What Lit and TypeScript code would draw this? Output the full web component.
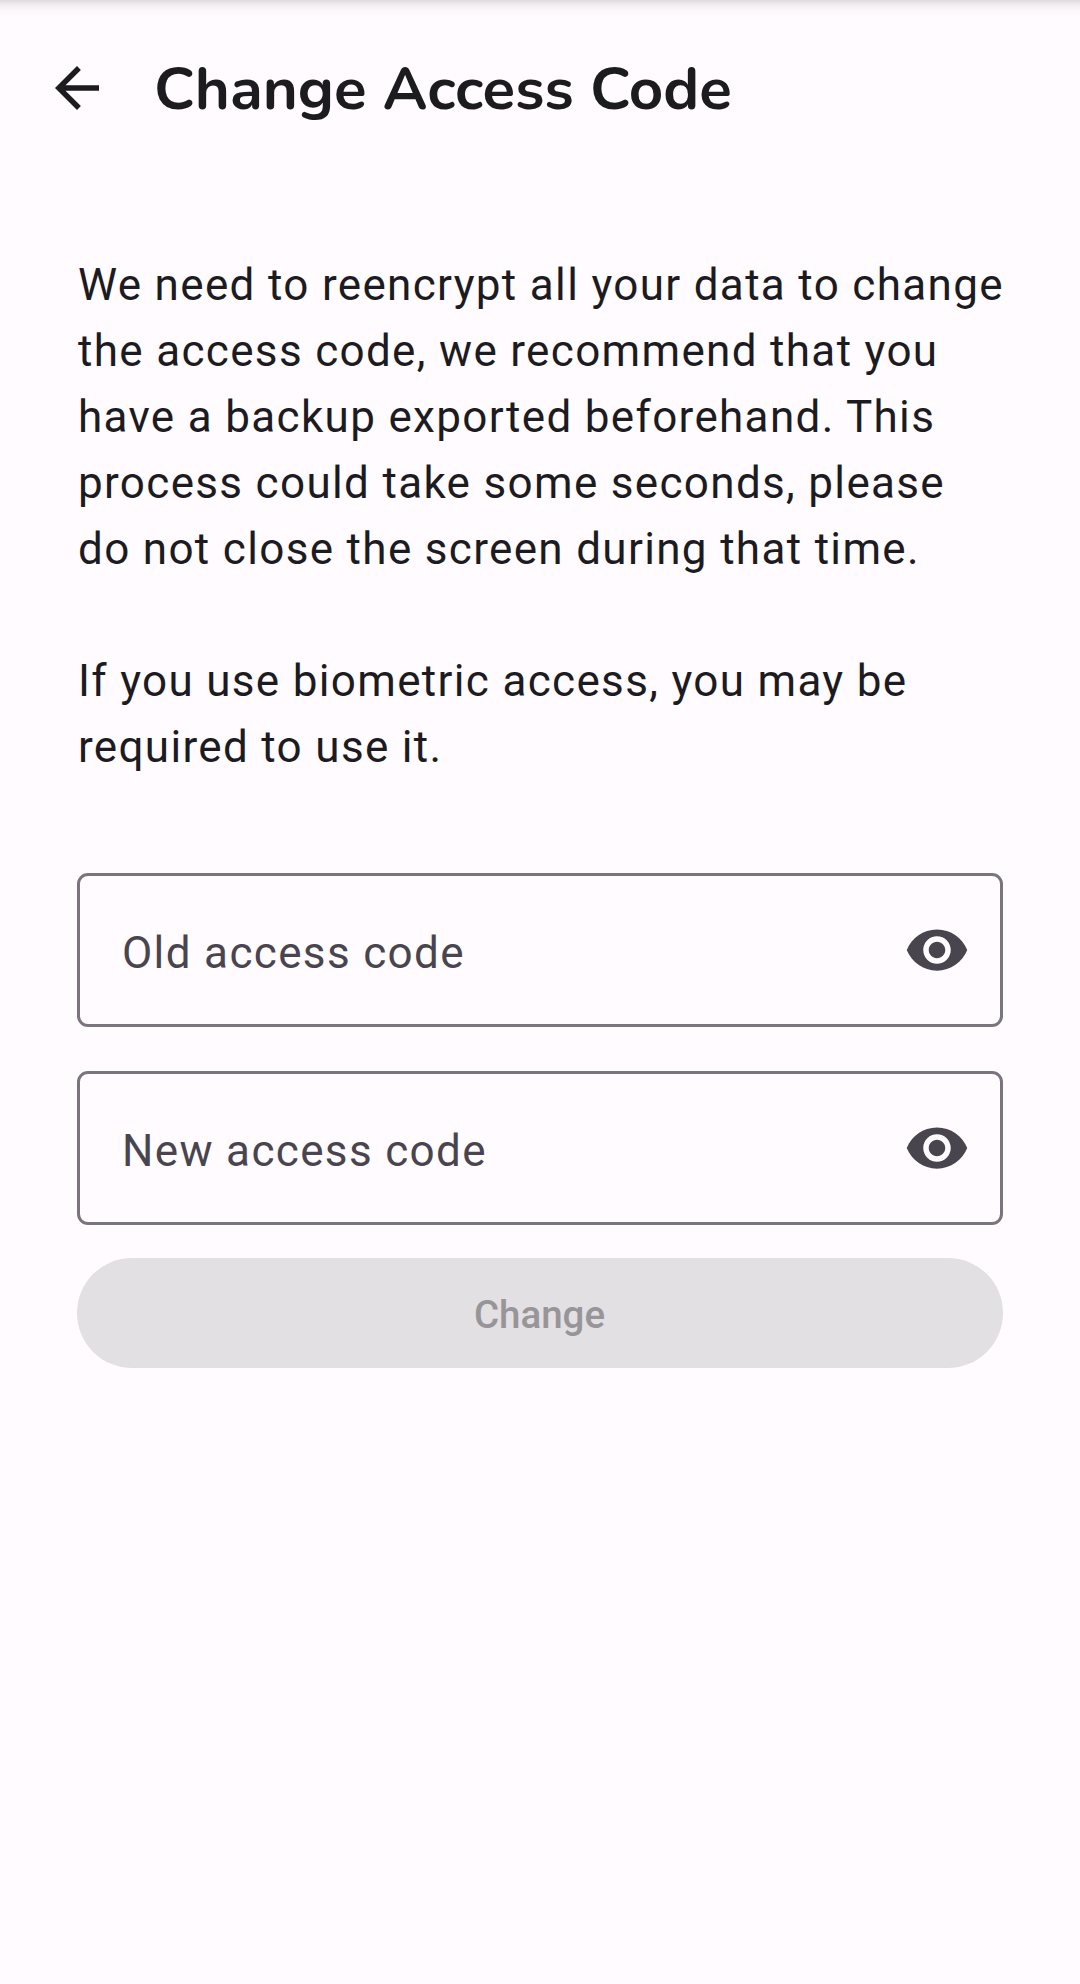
import { LitElement, html, css } from "lit";
import { customElement, property } from "lit/decorators.js";

@customElement("code-field")
class CodeField extends LitElement {
  @property() label = "";

  static styles = css`
    :host { display: block; }
    .field {
      box-sizing: border-box;
      height: 154px;
      border: 3px solid #79747e;
      border-radius: 11px;
      padding: 0 30px 0 42px;
      display: flex;
      align-items: center;
      justify-content: space-between;
    }
    .label {
      color: #49454f;
      font: 400 44px/66px Roboto, "Liberation Sans", sans-serif;
      letter-spacing: 1.35px;
      padding-top: 6px;
    }
    .eye { display: block; width: 66px; height: 66px; fill: #49454f; }
  `;

  render() {
    return html`
      <div class="field">
        <span class="label">${this.label}</span>
        <svg class="eye" viewBox="0 0 24 24">
          <path d="M12 4.5C7 4.5 2.73 7.61 1 12c1.73 4.39 6 7.5 11 7.5s9.27-3.11 11-7.5c-1.73-4.39-6-7.5-11-7.5zM12 17c-2.76 0-5-2.24-5-5s2.24-5 5-5 5 2.24 5 5-2.24 5-5 5zm0-8c-1.66 0-3 1.34-3 3s1.34 3 3 3 3-1.34 3-3-1.34-3-3-3z"/>
        </svg>
      </div>
    `;
  }
}

@customElement("app-root")
class AppRoot extends LitElement {
  static styles = css`
    :host { display: block; }
    .screen {
      height: 1984px;
      background: #fffbff;
      display: flex;
      flex-direction: column;
      overflow: hidden;
    }
    .bar {
      height: 176px;
      flex: none;
      box-sizing: border-box;
      padding-left: 44px;
      display: flex;
      align-items: center;
      gap: 44px;
      background: linear-gradient(
        rgba(0, 0, 0, 0.13),
        rgba(0, 0, 0, 0.055) 5px,
        rgba(0, 0, 0, 0.02) 10px,
        rgba(0, 0, 0, 0) 17px
      );
    }
    .back { width: 66px; height: 66px; fill: #1c1b1f; display: block; }
    .title {
      margin: 0;
      padding-top: 3px;
      color: #1c1b1f;
      font: 700 60px/77px Nunito, Lato, sans-serif;
      white-space: nowrap;
    }
    .content {
      padding: 76px 77px 0;
      display: flex;
      flex-direction: column;
    }
    .text {
      margin: 0 0 66px 1px;
      color: #1c1b1f;
      font: 400 44px/66px Roboto, "Liberation Sans", sans-serif;
      letter-spacing: 1.33px;
      white-space: nowrap;
    }
    .fields {
      margin-top: 27px;
      display: flex;
      flex-direction: column;
      gap: 44px;
    }
    .submit {
      margin-top: 33px;
      height: 110px;
      border: 0;
      border-radius: 55px;
      padding: 3px 1px 0 0;
      background: #e2e0e3;
      color: #979598;
      font: 500 38.5px/55px Roboto, "Liberation Sans", sans-serif;
      letter-spacing: 0;
    }
  `;

  render() {
    return html`
      <main class="screen">
        <header class="bar">
          <svg class="back" viewBox="0 0 24 24">
            <path d="M20 11H7.83l5.59-5.59L12 4l-8 8 8 8 1.41-1.41L7.83 13H20v-2z"/>
          </svg>
          <h1 class="title">Change Access Code</h1>
        </header>
        <section class="content">
          <p class="text">We need to reencrypt all your data to change<br>the access code, we recommend that you<br>have a backup exported beforehand. This<br>process could take some seconds, please<br>do not close the screen during that time.</p>
          <p class="text">If you use biometric access, you may be<br>required to use it.</p>
          <div class="fields">
            <code-field label="Old access code"></code-field>
            <code-field label="New access code"></code-field>
          </div>
          <button class="submit" disabled>Change</button>
        </section>
      </main>
    `;
  }
}
